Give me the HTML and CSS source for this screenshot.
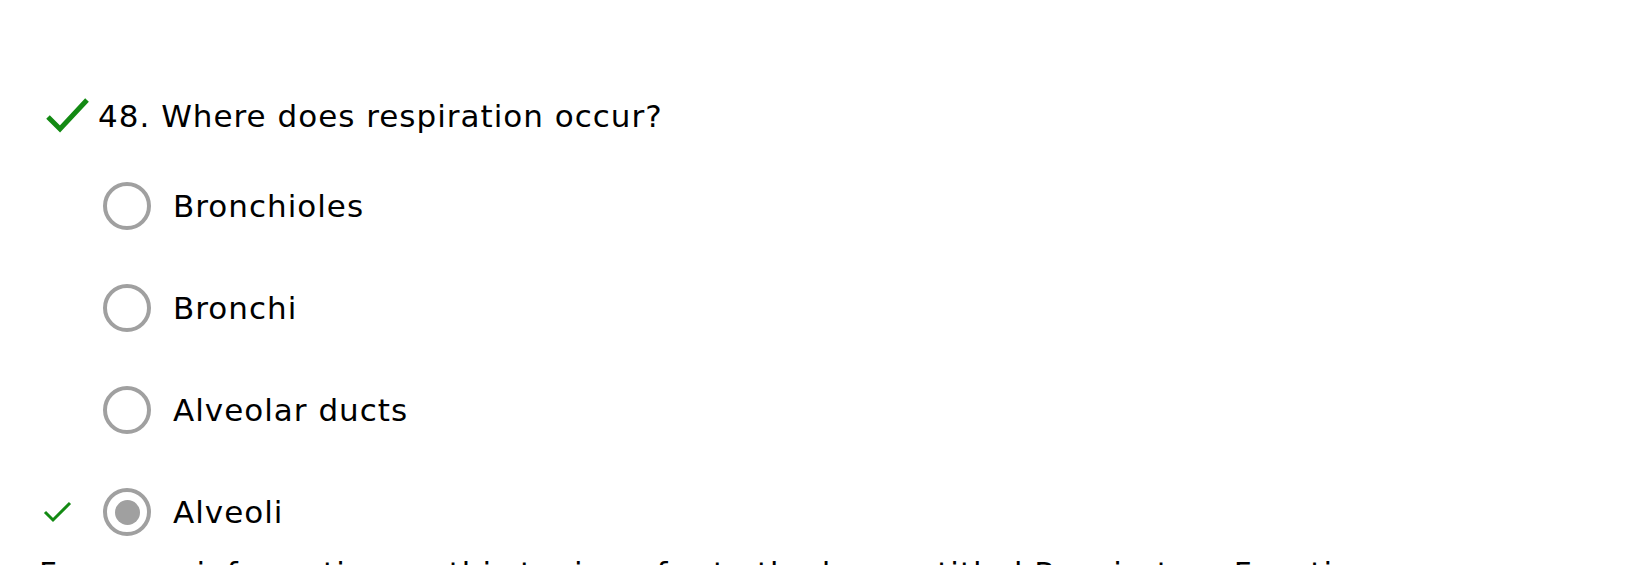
FILE: index.html
```html
<!DOCTYPE html>
<html lang="en">
<head>
<meta charset="utf-8">
<title>Quiz question 48</title>
<link rel="stylesheet" href="styles.css">
</head>
<body>
<div class="question">
  <div class="q-head">
    <svg class="q-check" width="44" height="36" viewBox="0 0 44 36" aria-hidden="true">
      <path d="M2 20 L14 32 L41 3" fill="none" stroke="#138a13" stroke-width="5" stroke-linecap="butt" stroke-linejoin="miter"/>
    </svg>
    <span class="q-text">48. Where does respiration occur?</span>
  </div>
  <ul class="options">
    <li class="option">
      <span class="mark"></span>
      <span class="radio"></span>
      <span class="label">Bronchioles</span>
    </li>
    <li class="option">
      <span class="mark"></span>
      <span class="radio"></span>
      <span class="label">Bronchi</span>
    </li>
    <li class="option">
      <span class="mark"></span>
      <span class="radio"></span>
      <span class="label">Alveolar ducts</span>
    </li>
    <li class="option">
      <span class="mark">
        <svg width="30" height="22" viewBox="0 0 30 22" aria-hidden="true">
          <path d="M2 11 L10 19 L27 2" fill="none" stroke="#138a13" stroke-width="3"/>
        </svg>
      </span>
      <span class="radio checked"></span>
      <span class="label">Alveoli</span>
    </li>
  </ul>
  <p class="note">For more information on this topic, refer to the lesson titled Respiratory Function.</p>
</div>
</body>
</html>
```
FILE: styles.css
```css
html, body {
  margin: 0;
  padding: 0;
  background: #ffffff;
}

body {
  font-family: "DejaVu Sans", Verdana, sans-serif;
  color: #000000;
  overflow: hidden;
}

.question {
  padding-top: 96px;
}

.q-head {
  display: flex;
  align-items: center;
  height: 40px;
  padding-left: 46px;
  gap: 8px;
}

.q-check {
  display: block;
  flex: none;
  margin-top: -2px;
}

.q-text {
  font-size: 31px;
  letter-spacing: 1px;
  line-height: 40px;
  white-space: nowrap;
}

.options {
  list-style: none;
  margin: 46px 0 0 0;
  padding: 0 0 0 43px;
  display: flex;
  flex-direction: column;
  gap: 54px;
}

.option {
  display: flex;
  align-items: center;
  height: 48px;
}

.mark {
  width: 60px;
  flex: none;
  display: flex;
  align-items: center;
}

.mark svg {
  display: block;
}

.radio {
  width: 48px;
  height: 48px;
  box-sizing: border-box;
  border: 4px solid #a0a0a0;
  border-radius: 50%;
  flex: none;
  display: flex;
  align-items: center;
  justify-content: center;
}

.radio.checked::after {
  content: "";
  width: 25px;
  height: 25px;
  border-radius: 50%;
  background: #a0a0a0;
}

.label {
  margin-left: 22px;
  font-size: 31px;
  letter-spacing: 1px;
  line-height: 40px;
  white-space: nowrap;
}

.note {
  margin: 20px 0 0 39px;
  font-size: 31px;
  letter-spacing: 1px;
  line-height: 35px;
  white-space: nowrap;
}
```
